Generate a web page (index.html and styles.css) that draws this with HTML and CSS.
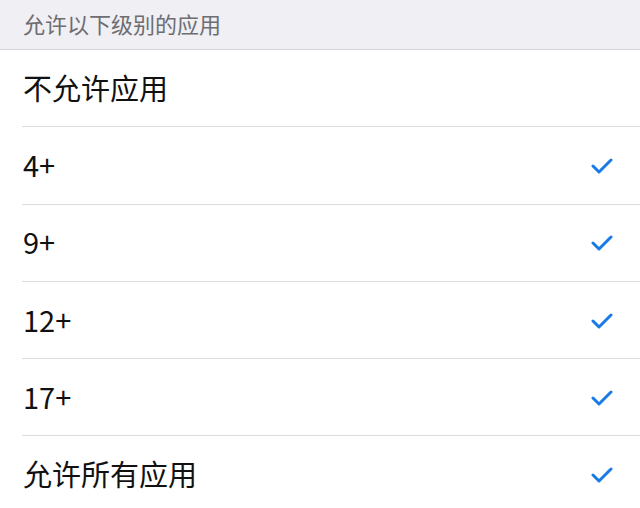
FILE: index.html
```html
<!DOCTYPE html>
<html lang="zh-CN">
<head>
    <meta charset="utf-8">
    <meta name="viewport" content="width=device-width, initial-scale=1">
    <title>允许的应用</title>
    <link rel="stylesheet" href="styles.css">
</head>
<body>
<div class="section-head"><span>允许以下级别的应用</span></div>
<ul class="list">
    <li class="row"><span class="label">不允许应用</span></li>
    <li class="row"><span class="label">4+</span><svg class="check" viewBox="0 0 22 17"><path d="M2 9 L8 15 L20 3"/></svg></li>
    <li class="row"><span class="label">9+</span><svg class="check" viewBox="0 0 22 17"><path d="M2 9 L8 15 L20 3"/></svg></li>
    <li class="row"><span class="label">12+</span><svg class="check" viewBox="0 0 22 17"><path d="M2 9 L8 15 L20 3"/></svg></li>
    <li class="row"><span class="label">17+</span><svg class="check" viewBox="0 0 22 17"><path d="M2 9 L8 15 L20 3"/></svg></li>
    <li class="row"><span class="label">允许所有应用</span><svg class="check" viewBox="0 0 22 17"><path d="M2 9 L8 15 L20 3"/></svg></li>
</ul>
</body>
</html>
```

FILE: styles.css
```css
body {
    margin: 0;
    background-color: #fff;
    font-family: "Noto Sans CJK SC", "Liberation Sans", sans-serif;
}

.section-head {
    height: 49px;
    padding-left: 23px;
    display: flex;
    align-items: center;
    background-color: #efeff4;
    border-bottom: 1px solid #d6d6da;
    color: #6d6d72;
    font-size: 22px;
    line-height: 1;
}

.section-head span {
    margin-top: -3px;
}

.list {
    list-style: none;
    margin: 0;
    padding: 0 0 0 22px;
}

.row {
    box-sizing: border-box;
    height: 77.3px;
    display: flex;
    align-items: center;
    justify-content: space-between;
    padding-right: 27px;
    border-bottom: 1px solid #dcdcdf;
}

.label {
    color: #111;
    font-size: 29px;
    line-height: 1;
    padding-left: 1px;
    margin-top: -2px;
}

.check {
    width: 22px;
    height: 17px;
}

.check path {
    fill: none;
    stroke: #1a7ae6;
    stroke-width: 3;
    stroke-linecap: round;
    stroke-linejoin: round;
}
```
